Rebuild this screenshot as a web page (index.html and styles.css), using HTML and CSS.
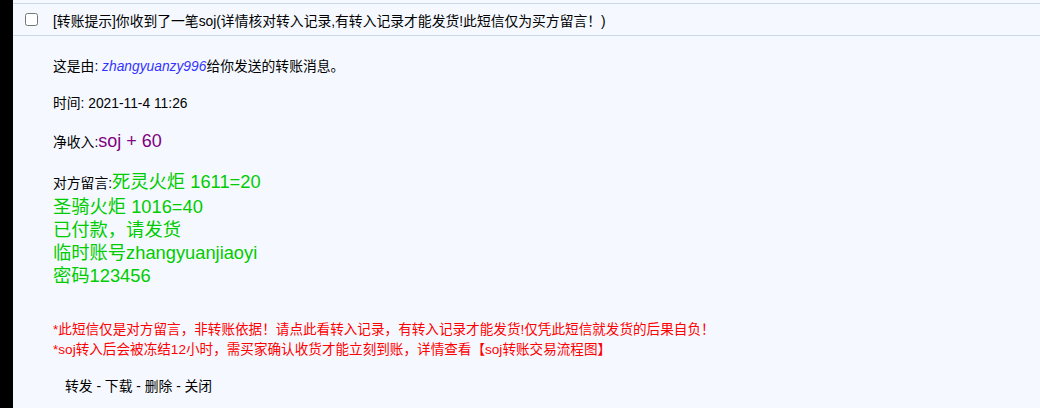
FILE: index.html
```html
<!doctype html>
<html>
<head>
<meta charset="utf-8">
<title>短消息</title>
<link rel="stylesheet" href="styles.css">
</head>
<body>
	<div class="frame">
		<div class="side"></div>
		<div class="main">
			<div class="msg-head">
				<input type="checkbox" class="chk">
				<span class="subject">[转账提示]你收到了一笔soj(详情核对转入记录,有转入记录才能发货!此短信仅为买方留言！)</span>
			</div>
			<div class="msg-body">
				<p>这是由: <a class="user" href="#">zhangyuanzy996</a>给你发送的转账消息。</p>
				<p>时间: 2021-11-4 11:26</p>
				<p class="income"><span class="label">净收入:</span>soj + 60</p>
				<p class="note"><span class="label">对方留言:</span>死灵火炬 1611=20<br>圣骑火炬 1016=40<br>已付款，请发货<br>临时账号zhangyuanjiaoyi<br>密码123456</p>
				<div class="warn">
					*此短信仅是对方留言，非转账依据！请点此看转入记录，有转入记录才能发货!仅凭此短信就发货的后果自负！<br>
					*soj转入后会被冻结12小时，需买家确认收货才能立刻到账，详情查看【soj转账交易流程图】
				</div>
				<div class="actions">
					<a href="#">转发</a> - <a href="#">下载</a> - <a href="#">删除</a> - <a href="#">关闭</a>
				</div>
			</div>
		</div>
	</div>
</body>
</html>
```
FILE: styles.css
```css
html, body{
	margin: 0;
	height: 100%;
}
body{
	font-family: "Liberation Sans", "Noto Sans CJK SC", sans-serif;
	font-size: 13.8px;
	color: #000;
	background-color: #f5f9ff;
}
.frame{
	display: flex;
	height: 100%;
}
.side{
	width: 13px;
	background-color: #000;
	flex-shrink: 0;
}
.main{
	flex: 1;
	padding-top: 3px;
}
.msg-head{
	display: flex;
	align-items: center;
	height: 31px;
	border-top: 1px solid #c9d9e8;
	border-bottom: 1px solid #c9d9e8;
	font-size: 13.8px;
}
.chk{
	width: 13px;
	height: 13px;
	margin: 0 15px 0 12px;
}
.msg-body{
	padding: 23px 0 0 40px;
}
.msg-body p{
	margin: 0 0 21px 0;
	line-height: 16px;
}
.user{
	color: #3333ff;
	font-style: italic;
	text-decoration: none;
}
.label{
	font-size: 13.8px;
	color: #000;
}
.income{
	color: #800080;
	font-size: 18px;
	line-height: 20px !important;
	margin-top: -2px !important;
	margin-bottom: 17px !important;
}
.note{
	color: #00cc00;
	font-size: 18.3px;
	line-height: 23px !important;
}
.warn{
	color: #ff0000;
	font-size: 13.6px;
	line-height: 20px;
	margin-top: 33px;
}
.actions{
	margin: 15px 0 0 12px;
}
.actions a{
	color: #000;
	text-decoration: none;
}
```
